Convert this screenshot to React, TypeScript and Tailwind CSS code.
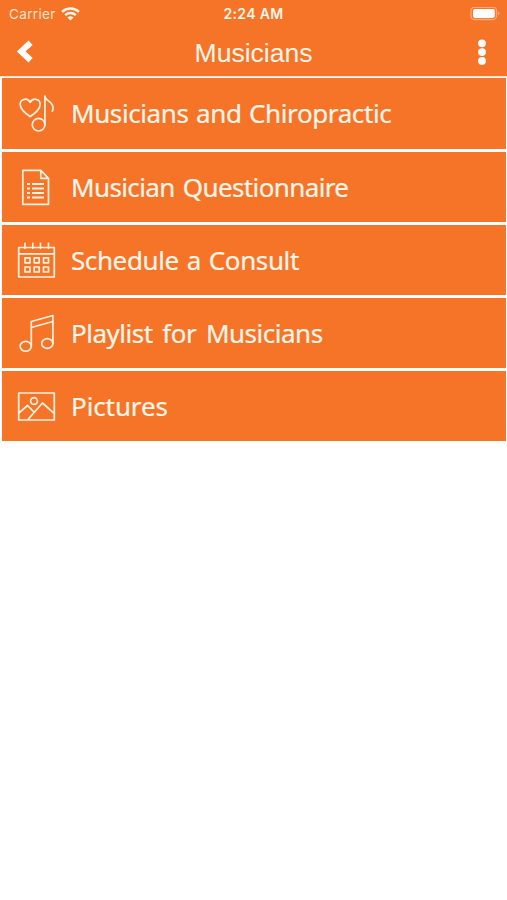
import type { ReactNode } from "react";

type RowProps = { label: string; spacing: string; height: string; children: ReactNode };

function Row({ label, spacing, height, children }: RowProps) {
  return (
    <li className={`flex items-center bg-[#f67427] ${height}`}>
      <svg className="ml-[14px] mr-[11px] h-11 w-11 shrink-0" viewBox="0 0 44 44" fill="none" stroke="#fff0df" strokeWidth="1.7" strokeLinejoin="round" strokeLinecap="round">
        {children}
      </svg>
      <span className={`whitespace-nowrap pb-px text-[26px] leading-9 text-[#fff6ea] [-webkit-text-stroke:0.2px_#fff6ea] ${spacing}`}>{label}</span>
    </li>
  );
}

export default function App() {
  return (
    <main className="min-h-[900px] w-full bg-white font-['Trebuchet_MS','Noto_Sans',sans-serif]">
      <header className="flex h-[76px] flex-col bg-[#f67427] font-['Liberation_Sans',sans-serif] text-[#fff6ea]">
        <div className="grid h-7 grid-cols-3 items-center font-['Inter',sans-serif] text-[13.5px]">
          <div className="flex items-center gap-[5px] pl-[9px] text-[#ffe3cc]">
            <span className="tracking-[0.35px]">Carrier</span>
            <svg className="h-[15px] w-[19px]" viewBox="0 0 19 15" fill="none" stroke="#fff6ea" strokeWidth="2.5">
              <path d="M1.1 4.9C5.8.4 13.2.4 17.9 4.9M4.2 8.2c3-2.8 7.6-2.8 10.6 0" />
              <path d="M6.4 10.5c1.8-1.6 4.4-1.6 6.2 0L9.5 13.6Z" fill="#fff6ea" stroke="none" />
            </svg>
          </div>
          <span className="pb-px text-center text-[14px] font-semibold tracking-[0.35px]">2:24 AM</span>
          <svg className="ml-auto mr-[6px] h-[14px] w-[31px]" viewBox="0 0 31 14">
            <rect x="1" y=".3" width="25.5" height="12.2" rx="3.5" fill="none" stroke="#fba676" strokeWidth="1.3" />
            <rect x="3" y="2.1" width="21.8" height="8.8" rx="1.8" fill="#fff" />
            <path d="M28 4q3 2.3 0 4.6Z" fill="#fba676" />
          </svg>
        </div>
        <div className="grid h-12 grid-cols-[60px_1fr_60px] items-center">
          <svg className="ml-4 h-6 w-[18px]" viewBox="0 0 18 24" fill="none" stroke="#fff" strokeWidth="6">
            <path d="M14.6 2.7 5.2 11.4l9.4 8.9" />
          </svg>
          <h1 className="pt-px text-center text-[26.5px] leading-8">Musicians</h1>
          <svg className="ml-auto mr-5 h-[26px] w-[10px]" viewBox="0 0 10 26" fill="#fff">
            <circle cx="5" cy="4.3" r="3.9" />
            <circle cx="5" cy="13.1" r="3.9" />
            <circle cx="5" cy="21.9" r="3.9" />
          </svg>
        </div>
      </header>
      <div className="h-px bg-[#fddfc9]" />
      <ul className="ml-[2px] mr-px mt-px flex flex-col gap-[3px]">
        <Row label="Musicians and Chiropractic" spacing="tracking-[-0.4px] [word-spacing:1.2px]" height="h-[71px]">
          <path d="M14.2 24.6C9.5 21.2 4.2 17.4 4.2 12.4c0-5.8 7.5-7 10-2 2.5-5 10-3.8 10 2 0 5-5.3 8.8-10 12.2Z" />
          <circle cx="22.6" cy="32.7" r="6.3" />
          <path d="M28.9 32.7V4c0 5 8.2 5 8.2 12 0 1.3-.3 2.3-.8 3.2" />
        </Row>
        <Row label="Musician Questionnaire" spacing="tracking-[-0.62px] [word-spacing:2px]" height="h-[70px]">
          <path d="M6.8 5.3h18l7.7 8v26H6.8ZM24.8 5.3v8h7.7" />
          <path strokeLinecap="butt" strokeWidth="2" d="M11 19h3m2 0h12M11 23.5h3m2 0h12M11 28h3m2 0h12M11 32.5h3m2 0h12" />
        </Row>
        <Row label="Schedule a Consult" spacing="tracking-[-0.4px] [word-spacing:1.6px]" height="h-[70px]">
          <path d="M2.7 9.5h35.6v29.5H2.7ZM2.7 15.8h35.6M9 5.3v5M16.8 5.3v5M24.5 5.3v5M32.5 5.3v5" />
          <path d="M9 19.8h5v5H9ZM18.2 19.8h5v5h-5ZM27.5 19.8h5v5h-5ZM9 29h5v5H9ZM18.2 29h5v5h-5ZM27.5 29h5v5h-5Z" />
        </Row>
        <Row label="Playlist for Musicians" spacing="tracking-[-0.5px] [word-spacing:3.5px]" height="h-[70px]">
          <ellipse cx="9.7" cy="35.3" rx="5.6" ry="4.9" />
          <ellipse cx="31.3" cy="32.5" rx="5.6" ry="4.9" />
          <path d="M15.3 35.3V10.5L36.9 4.5V32.5M15.3 16.5l21.6-6" />
        </Row>
        <Row label="Pictures" spacing="tracking-[-0.1px]" height="h-[70px]">
          <path d="M2.7 9h35.6v27H2.7ZM3 29l8.5-7.5 6.5 6.5M11.5 36l15-17 11.8 10.7" />
          <circle cx="18" cy="17" r="3.4" />
        </Row>
      </ul>
    </main>
  );
}
